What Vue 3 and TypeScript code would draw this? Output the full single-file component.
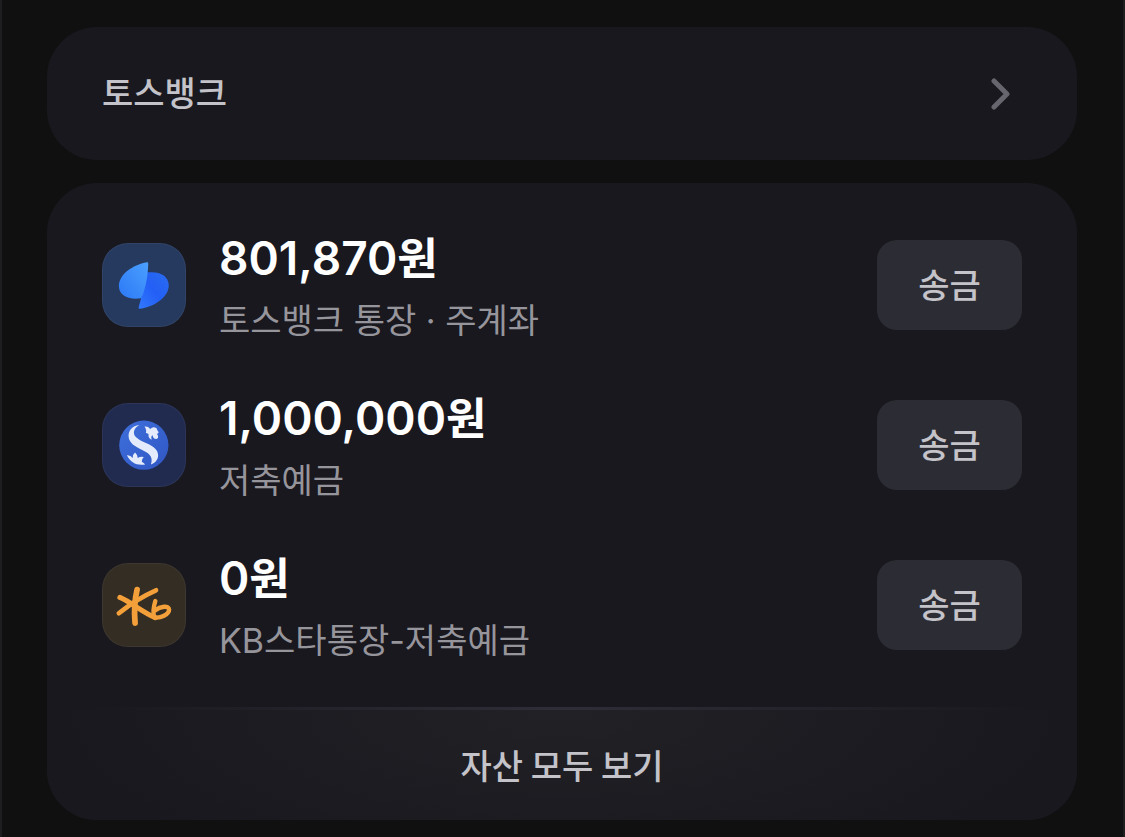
<script setup lang="ts">
interface Account {
  id: 'toss' | 'shinhan' | 'kb'
  amount: string
  name: string
}

const accounts: Account[] = [
  { id: 'toss', amount: '801,870', name: '토스뱅크 통장 · 주계좌' },
  { id: 'shinhan', amount: '1,000,000', name: '저축예금' },
  { id: 'kb', amount: '0', name: 'KB스타통장-저축예금' },
]
</script>

<template>
  <main class="page">
    <a class="card bank-link" href="#">
      <span>토스뱅크</span>
      <svg class="chevron" viewBox="0 0 20 32" aria-hidden="true">
        <path d="M3 3 L16 16 L3 29" />
      </svg>
    </a>

    <section class="card assets">
      <ul class="accounts">
        <li v-for="account in accounts" :key="account.id" class="account">
          <span class="logo" :class="account.id">
            <svg v-if="account.id === 'toss'" viewBox="27 24 249 249" aria-hidden="true">
              <defs>
                <linearGradient id="toss-left" x1="0" y1="1" x2="1" y2="0">
                  <stop offset="0" stop-color="#2c78f6" />
                  <stop offset="1" stop-color="#4ba0ff" />
                </linearGradient>
                <linearGradient id="toss-right" x1="0" y1="1" x2="1" y2="0">
                  <stop offset="0" stop-color="#3179ff" />
                  <stop offset="0.5" stop-color="#235ff5" />
                  <stop offset="1" stop-color="#2a6cf0" />
                </linearGradient>
              </defs>
              <path
                fill="url(#toss-right)"
                d="M157 112 C196 106 224 120 225 149 C225 184 182 214 138 219 Q134 219 136 213 L143 187 Z"
              />
              <path
                fill="url(#toss-left)"
                d="M160 81 Q165 80 164 86 C163 126 155 164 143 188 C104 193 77 180 77 151 C78 117 117 89 160 81 Z"
              />
            </svg>
            <svg v-else-if="account.id === 'shinhan'" viewBox="27 24 249 249" aria-hidden="true">
              <defs>
                <linearGradient id="shinhan-disc" x1="0" y1="0" x2="1" y2="1">
                  <stop offset="0" stop-color="#3e6fdb" />
                  <stop offset="1" stop-color="#3057c4" />
                </linearGradient>
              </defs>
              <circle cx="151" cy="149" r="73" fill="url(#shinhan-disc)" />
              <g fill="#e4ebfd">
                <path
                  d="M138 89 C116 91 104 107 106 125 C108 143 125 153 143 162 C163 171 181 181 172 206 C187 201 195 189 193 175 C190 157 172 149 154 141 C131 131 119 122 122 108 C124 99 130 93 138 89 Z"
                />
                <path
                  d="M153 94 Q163 92 170 101 Q178 92 189 99 Q190 106 195 111 Q194 115 190 116 Q195 121 193 128 Q187 133 180 128 L176 119 Q171 124 174 133 Q163 128 165 116 L157 112 Q160 105 153 94 Z"
                />
                <path
                  d="M101 179 Q110 177 118 187 Q118 176 125 171 Q132 177 133 187 Q142 181 151 184 Q144 190 145 198 Q151 201 155 206 C132 211 111 201 101 179 Z"
                />
              </g>
            </svg>
            <svg v-else viewBox="27 24 249 249" aria-hidden="true">
              <g fill="none" stroke="#f3a03a" stroke-linecap="round" stroke-linejoin="round">
                <path stroke-width="17" d="M131 103 C124 133 122 169 125 202" />
                <path stroke-width="14" d="M187 105 C151 121 110 146 77 173" />
                <path stroke-width="15" d="M80 126 C111 139 151 172 185 186" />
                <path
                  stroke-width="13"
                  d="M185 137 C180 153 177 169 182 185 C200 189 226 176 226 162 C225 149 200 152 184 165"
                />
              </g>
            </svg>
          </span>
          <div class="details">
            <strong class="amount">{{ account.amount }}<span class="unit">원</span></strong>
            <span class="name">{{ account.name }}</span>
          </div>
          <button class="send" type="button">송금</button>
        </li>
      </ul>
      <a class="view-all" href="#">자산 모두 보기</a>
    </section>
  </main>
</template>

<style>
body {
  margin: 0;
  background: #101011;
}
</style>

<style scoped>
.page {
  box-sizing: border-box;
  min-height: 100vh;
  padding: 27px 46px 17px 45px;
  border: solid #1e1e20;
  border-width: 0 2px;
  display: flex;
  flex-direction: column;
  gap: 23px;
  background: #101011;
  color: #c3c3c9;
  font-family: Inter, "Noto Sans CJK KR", sans-serif;
  font-size: 34px;
  font-weight: 500;
  line-height: 48px;
}

.card {
  border-radius: 50px;
  background: #19181e;
}

a {
  color: inherit;
  text-decoration: none;
}

.bank-link {
  display: flex;
  align-items: center;
  justify-content: space-between;
  min-height: 133px;
  padding: 0 66px 0 55px;
}

.chevron {
  width: 20px;
  height: 32px;
  fill: none;
  stroke: #67666f;
  stroke-width: 5;
  stroke-linecap: round;
  stroke-linejoin: round;
}

.assets {
  overflow: hidden;
}

.accounts {
  margin: 0;
  padding: 22px 55px;
  list-style: none;
}

.account {
  display: flex;
  align-items: center;
  height: 160px;
}

.logo {
  box-sizing: border-box;
  flex: none;
  width: 84px;
  height: 84px;
  margin-right: 33px;
  border-radius: 26px;
  overflow: hidden;
  box-shadow: inset 0 0 0 1px rgba(255, 255, 255, 0.05);
}

.logo svg {
  display: block;
  width: 100%;
  height: 100%;
}

.toss {
  background: #263a5f;
}

.shinhan {
  background: #212b50;
}

.kb {
  background: #332d24;
}

.details {
  flex: 1;
  display: flex;
  flex-direction: column;
  gap: 10px;
  padding-top: 4px;
}

.amount {
  color: #ffffff;
  font-size: 46px;
  font-weight: 600;
  line-height: 56px;
}

.unit {
  font-size: 44px;
  font-weight: 700;
}

.name {
  color: #96959c;
  font-weight: 400;
}

.send {
  flex: none;
  width: 145px;
  height: 90px;
  padding: 2px 0 0;
  border: 0;
  border-radius: 20px;
  background: #2c2c34;
  color: inherit;
  font: inherit;
}

.view-all {
  display: flex;
  align-items: center;
  justify-content: center;
  height: 110px;
  border-top: 3px solid;
  border-image: linear-gradient(90deg, #19181e 4%, #2f2e38 50%, #19181e 96%) 1;
  background: radial-gradient(ellipse 50% 160% at 50% 0, #222126, #19181e);
  font-family: "Noto Sans CJK KR", sans-serif;
}
</style>
